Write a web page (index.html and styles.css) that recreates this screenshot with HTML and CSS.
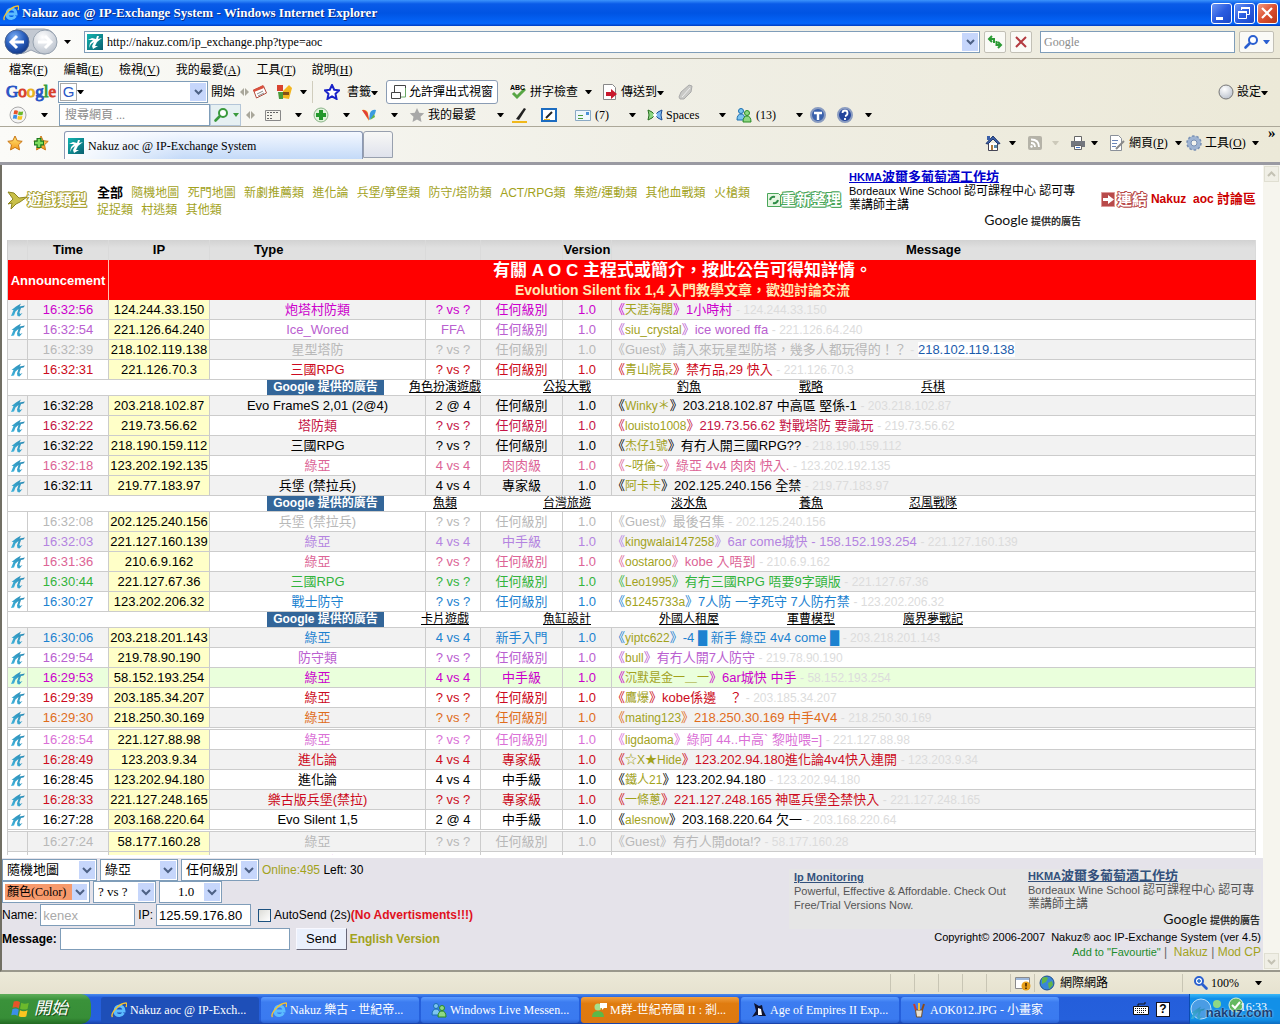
FILE: index.html
```html
<!doctype html>
<html lang="zh-Hant">
    <head>
        <meta charset="UTF-8" />
        <title>Nakuz aoc @ IP-Exchange System</title>
        <link rel="stylesheet" href="styles.css">
    </head>
    <body>
        <!-- shared icons -->
        <svg class="defs" width="0" height="0">
            <defs>
                <linearGradient id="gTeal" x1="0" y1="0" x2="1" y2="1"><stop offset="0" stop-color="#13b5b0"/><stop offset="1" stop-color="#0a5f70"/></linearGradient>
                <linearGradient id="gKite" x1="1" y1="0" x2="0" y2="1"><stop offset="0" stop-color="#2a86b0"/><stop offset="1" stop-color="#3fb4dc"/></linearGradient>
                <radialGradient id="gNav" cx=".4" cy=".3" r=".8"><stop offset="0" stop-color="#7fb2f5"/><stop offset=".5" stop-color="#2a5fbe"/><stop offset="1" stop-color="#0c2d78"/></radialGradient>
                <radialGradient id="gGrey" cx=".4" cy=".3" r=".8"><stop offset="0" stop-color="#fff"/><stop offset="1" stop-color="#b4bcc8"/></radialGradient>
                <linearGradient id="gStar" x1="0" y1="0" x2="0" y2="1"><stop offset="0" stop-color="#ffe97a"/><stop offset="1" stop-color="#f59a1c"/></linearGradient>
                <symbol id="kite" viewBox="0 0 16 16"><path fill="url(#gKite)" d="M1 14 L3.500 8 L1.500 8 L6 4.500 L11 1.500 L9.500 4.500 L15 3.500 L13.500 5.500 L11 6 L9.500 10.500 L10 12 L12.500 11 L9.500 14.500 L7.500 14 L7 11.500 L8.500 7 L5.500 9.500 L4 13.500 Z"/></symbol>
                <symbol id="site" viewBox="0 0 16 16"><path fill="url(#gTeal)" d="M0 0h16v16H0z"/><path fill="#fff" d="M1 6 L5 4 L9 5 L10 2 L12 2 L11 5 L15 4 L10 8 L8 12 L11 12 L6 15 L5 12 L7 8 L4 10 L2 14 L3 9 L6 6 Z"/></symbol>
                <symbol id="ie" viewBox="0 0 16 16"><path fill="none" stroke="#5cbcff" stroke-width="3" d="M4 9h9c0-3-2-5-4.500-5S4 6 4 9s2 4.500 4.500 4.500c2 0 3-1 4-2.500"/><path fill="none" stroke="#f7c331" stroke-width="1.400" d="M1.500 15C-1 12 8 1 15 1c1 0 1 2 0 4"/></symbol>
                <symbol id="star" viewBox="0 0 16 16"><path d="M8 1l2.200 4.700 5 .6-3.700 3.500 1 5.100L8 12.400 3.500 14.900l1-5.100L.8 6.300l5-.6z"/></symbol>
                <symbol id="flag" viewBox="0 0 16 16"><path fill="#e8542a" d="M3 2q3-1 5 .5L7 7.500Q5 6 2 7z"/><path fill="#6cb92c" d="M9 3q3 1.500 6 0l-1 5q-3 1-6-.3z"/><path fill="#3c8fe8" d="M2 8q3-1 5 .5L6 13.500Q4 12 1 13z"/><path fill="#f9c520" d="M8 9q3 1.500 6 0l-1 5q-3 1-6-.3z"/></symbol>
                <symbol id="people" viewBox="0 0 16 16"><g stroke-width="1"><circle cx="5" cy="4" r="2.500" fill="#7cc4f0" stroke="#1a6eb0"/><path fill="#7cc4f0" stroke="#1a6eb0" d="M1 13q0-6 4-6t4 6z"/><circle cx="11" cy="6" r="2.500" fill="#8ed884" stroke="#2a8a24"/><path fill="#8ed884" stroke="#2a8a24" d="M7 15q0-6 4-6t4 6z"/></g></symbol>
                <symbol id="lens" viewBox="0 0 16 16"><circle cx="10" cy="6" r="4" fill="#fff" stroke="currentColor" stroke-width="2"/><path stroke="currentColor" stroke-width="2.600" stroke-linecap="round" d="M6.500 9.500L2.500 13.500"/></symbol>
            </defs>
        </svg>

        <header class="titlebar">
            <svg class="icon"><use href="#ie"/></svg>
            <h1>Nakuz aoc @ IP-Exchange System - Windows Internet Explorer</h1>
            <button class="win" aria-label="Minimize"><svg width="21" height="21"><path fill="#fff" d="M5 14h7v3H5z"/></svg></button>
            <button class="win" aria-label="Restore"><svg width="21" height="21" fill="none" stroke="#fff"><path d="M7.500 7V4.500h8v7H13M4.500 8.500h8v7h-8z"/><path stroke-width="2" d="M7 5h9M4 9h9"/></svg></button>
            <button class="win close" aria-label="Close"><svg width="21" height="21" stroke="#fff" stroke-width="2.200"><path d="M5 5l10 10M15 5L5 15"/></svg></button>
        </header>

        <div class="addressbar">
            <svg class="nav" width="74" height="28" viewBox="0 0 74 28">
                <path fill="#c3c9d2" stroke="#9aa4b2" d="M16 1h28a12 12 0 0 1 0 25q-6 0-13-4-6 4-15 4z"/>
                <circle cx="17" cy="14" r="12" fill="url(#gNav)" stroke="#47618f"/>
                <circle cx="45" cy="14" r="12" fill="url(#gGrey)" stroke="#98a3b0"/>
                <path fill="none" stroke="#fff" stroke-width="3" d="M24 14H12M17 8l-6 6 6 6"/>
                <path fill="none" stroke="#fff" stroke-width="3" d="M38 14h12M45 8l6 6-6 6"/>
                <path d="M64 12h7l-3.500 4z"/>
            </svg>
            <div class="url">
                <svg class="icon"><use href="#site"/></svg>
                <input aria-label="Address" value="http://nakuz.com/ip_exchange.php?type=aoc">
                <button class="drop" aria-label="History"></button>
            </div>
            <button class="tool" aria-label="Refresh"><svg width="16" height="16" fill="none" stroke="#2b9a34" stroke-width="2"><path d="M5 2L2 5l3 3M2.500 5H7v4"/><path d="M11 8l3 3-3 3M13.500 11H9.500V7"/></svg></button>
            <button class="tool" aria-label="Stop"><svg width="16" height="16" stroke="#b33a40" stroke-width="2"><path d="M3 3l10 10M13 3L3 13"/></svg></button>
            <input class="search" aria-label="Search" placeholder="Google">
            <button class="tool find" aria-label="Go"><svg class="icon"><use href="#lens"/></svg><i class="caret"></i></button>
        </div>

        <nav class="menubar">
            <button>檔案(<u>F</u>)</button>
            <button>編輯(<u>E</u>)</button>
            <button>檢視(<u>V</u>)</button>
            <button>我的最愛(<u>A</u>)</button>
            <button>工具(<u>T</u>)</button>
            <button>說明(<u>H</u>)</button>
        </nav>

        <div class="googlebar">
            <span class="glogo"><b class="gb">G</b><b class="gr">o</b><b class="gy">o</b><b class="gb">g</b><b class="gg">l</b><b class="gr">e</b></span>
            <div class="combo"><span class="gbox">G</span><i class="caret"></i><input aria-label="Google search"><button class="drop" aria-label="More"></button></div>
            <button>開始</button>
            <i class="grip"></i>
            <svg class="icon"><path fill="#fff" stroke="#b34a3c" d="M1.500 6l10-4 3 7-10 5z"/><path fill="#d8503e" d="M1 6l10-5 1 3L2 8z"/><path stroke="#8a8a8a" d="M5 10l6-3M6 12l6-3"/></svg>
            <svg class="icon"><path fill="#d9432f" d="M1 1h6v6H1z"/><path fill="#4a9b3c" d="M2 8h6l-1 7H3z"/><path fill="#f3b61f" d="M7 7l6-6 3 3-3 11-6-1z"/><path fill="#844f18" d="M7 8h6v3H7z"/></svg>
            <i class="caret"></i>
            <i class="rule"></i>
            <svg class="icon" fill="#fff" stroke="#1a23c8" stroke-width="2"><use href="#star"/></svg>
            <button>書籤<i class="caret"></i></button>
            <button class="popup"><svg class="icon" fill="#fff" stroke="#444"><path d="M4.500 1.500h11v7h-11z"/><path stroke="#6aa864" d="M7.500 9v4h8V4"/><path d="M1.500 8.500h9v6h-9z"/></svg>允許彈出式視窗</button>
            <svg class="icon"><path fill="none" stroke="#58a644" stroke-width="3" d="M3 9l4 4 8-8"/><text x="0" y="6" class="abc">ABC</text></svg>
            <button>拼字檢查</button>
            <i class="caret"></i>
            <svg class="icon"><path fill="#fff" stroke="#888" d="M1.500.5h9l3 3v12h-12z"/><path fill="#c8182c" d="M4 8h5V5l6 5-6 5v-3H4z"/></svg>
            <button>傳送到<i class="caret"></i></button>
            <svg class="icon"><path fill="#c9c9c6" stroke="#aaa" d="M2 13l2-5 8-7 3 1-1 6-7 7-4 0z"/><path stroke="#eee" d="M5 13l8-9"/></svg>
            <span></span>
            <svg class="icon"><circle cx="8" cy="8" r="7" fill="url(#gGrey)" stroke="#777"/></svg>
            <button>設定<i class="caret"></i></button>
        </div>

        <div class="livebar">
            <svg class="icon big" viewBox="0 0 18 18"><circle cx="9" cy="9" r="8" fill="#f4f4f4" stroke="#a9a9a9"/><use href="#flag" x="3" y="3" width="12" height="12"/></svg>
            <i class="caret"></i>
            <input aria-label="Search web" placeholder="搜尋網頁 ...">
            <button class="gofind" aria-label="Search"><svg class="icon"><use href="#lens"/></svg><i class="caret"></i></button>
            <i class="grip"></i>
            <svg class="icon"><path fill="#f5f4ec" stroke="#888" d="M.5 3.500h15v10H.5z"/><path stroke="#666" stroke-dasharray="2 1" d="M2 5.500h12M2 8.500h5M2 11.500h5"/></svg>
            <i class="caret"></i>
            <svg class="icon"><circle cx="8" cy="8" r="7" fill="#dff2da" stroke="#8ab488"/><path stroke="#23982c" stroke-width="4" d="M8 3v10M3 8h10"/></svg>
            <i class="caret"></i>
            <svg class="icon"><path fill="#f39c1c" d="M8 14L1 3q4-1 6 3z"/><path fill="#e03c3c" d="M1 3q5 0 6 5l1 5z"/><path fill="#3a9be0" d="M8 13l1-7q2-4 6-3-1 7-7 10z"/><path fill="#62b548" d="M9 13l4-6 1 3z"/></svg>
            <i class="caret"></i>
            <svg class="icon" fill="#a8a8a8"><use href="#star"/></svg>
            <button>我的最愛</button>
            <i class="caret"></i>
            <svg class="icon"><path fill="#222" d="M4 12L12 1l2 1-7 11z"/><path stroke="#f0b81c" stroke-width="2" d="M0 15h15"/></svg>
            <svg class="icon"><path fill="#fff" stroke="#1c6cc0" stroke-width="2" d="M1 2h14v12H1z"/><path stroke="#222" stroke-width="2" d="M5 11l6-6"/><path stroke="#f0b81c" d="M3 12.500h6"/></svg>
            <svg class="icon"><path fill="#eef6fc" stroke="#8aa9c4" d="M.5 3.500h15v10H.5z"/><path stroke="#4a9b3c" d="M3 8.500h5M3 11.500h5"/><path fill="#4a90d8" d="M11 5h3v3h-3z"/></svg>
            <button>(7)</button>
            <i class="caret"></i>
            <svg class="icon"><path fill="#8ed884" stroke="#286e20" d="M1 3l4 2 3 3-3 3-4 2 1-5z"/><path fill="#7cb8f0" stroke="#1c4e94" d="M15 3l-4 2-3 3 3 3 4 2-1-5z"/><circle cx="8" cy="8" r="2" fill="#fff"/></svg>
            <button>Spaces</button>
            <i class="caret"></i>
            <svg class="icon"><use href="#people"/></svg>
            <button>(13)</button>
            <i class="caret"></i>
            <svg class="icon"><circle cx="8" cy="8" r="7" fill="#3a62ac" stroke="#8a9cc0" stroke-width="2"/><path stroke="#fff" stroke-width="2.400" d="M4 6h8M8 6v7"/></svg>
            <svg class="icon"><circle cx="8" cy="8" r="7" fill="#24459c" stroke="#8a9cc0" stroke-width="2"/><path fill="none" stroke="#fff" stroke-width="1.800" d="M5.500 6q0-2.500 2.500-2.500T10.500 6 8 9M8 11v2"/></svg>
            <i class="caret"></i>
        </div>

        <div class="tabrow">
            <svg class="icon" fill="url(#gStar)" stroke="#c87414"><use href="#star"/></svg>
            <svg class="icon"><g fill="url(#gStar)" stroke="#c87414"><use href="#star"/></g><path stroke="#1f7a20" stroke-width="5" d="M6 3v10M1 8h10"/><path stroke="#7ddc5c" stroke-width="2.500" d="M6 4v8M2 8h8"/></svg>
            <button class="tab"><svg class="icon"><use href="#site"/></svg>Nakuz aoc @ IP-Exchange System</button>
            <button class="newtab" aria-label="New tab"></button>
            <span></span>
            <svg class="icon"><path fill="#fff" stroke="#445" d="M3.500 8v7.500h9V8"/><path fill="#3b5fa8" stroke="#22396e" d="M1 8.500L8 1l7 7.500-2 .5-5-5-5 5z"/><path fill="#3b5fa8" d="M2 1h3v4H2z"/><path fill="#b07a3a" d="M6 10h2v5H6z"/><path fill="#58a" d="M9 10h3v3H9z"/></svg>
            <i class="caret"></i>
            <svg class="icon"><rect x="1" y="1" width="14" height="14" rx="2" fill="#b5b3a8"/><path fill="none" stroke="#fff" stroke-width="1.800" d="M4 8q4 0 4 4M4 4.500q8 0 8 7.500"/><circle cx="4.500" cy="11.500" r="1.200" fill="#fff"/></svg>
            <i class="caret pale"></i>
            <svg class="icon"><path fill="#fff" stroke="#666" d="M4.500 1.500h7v5h-7z"/><path fill="#73777e" d="M1 6h14v6H1z"/><path fill="#fff" stroke="#666" d="M4.500 10.500h7v4h-7z"/><path stroke="#3f74c8" d="M6 12.500h4"/></svg>
            <i class="caret"></i>
            <svg class="icon"><path fill="#fff" stroke="#8a9099" d="M1.500.5h8l3 3v12h-11z"/><path stroke="#6b86b8" d="M3 5.500h6M3 8.500h5M3 11.500h4"/><path stroke="#888" stroke-width="2" d="M7 14l8-8"/></svg>
            <button>網頁(<u>P</u>)</button>
            <i class="caret"></i>
            <svg class="icon"><circle cx="8" cy="8" r="5" fill="none" stroke="#9fb4d2" stroke-width="4"/><circle cx="8" cy="8" r="7" fill="none" stroke="#7890b4" stroke-width="1.500" stroke-dasharray="2.500 1.900"/><circle cx="8" cy="8" r="3" fill="#f4f4ee" stroke="#7890b4"/></svg>
            <button>工具(<u>O</u>)</button>
            <i class="caret"></i>
            <button class="chevrons">»</button>
        </div>

        <div class="viewport">
            <main class="page">
                <section class="list">
                    <div class="top">
                        <div class="banner gold"><svg width="20" height="20" fill="#c9c04a" stroke="#8d8520"><path d="M1 2l6 1 5 5 8-1-7 5-4 2-5 5 1-6-4 1 5-5z"/></svg><span>遊戲類型</span></div>
                        <div class="cats">
                            <a href="#" class="on">全部</a> <a href="#">隨機地圖</a> <a href="#">死門地圖</a> <a href="#">新劇推薦類</a> <a href="#">進化論</a> <a href="#">兵堡/箏堡類</a> <a href="#">防守/塔防類</a> <a href="#">ACT/RPG類</a> <a href="#">集遊/運動類</a> <a href="#">其他血戰類</a> <a href="#">火槍類</a><br>
                            <a href="#">捉捉類</a> <a href="#">村逃類</a> <a href="#">其他類</a>
                        </div>
                        <a href="#" class="banner reload"><svg width="14" height="14"><path fill="#e6f6e2" stroke="#4aa65a" d="M.5.5h11l2 2v11H.5z"/><path fill="none" stroke="#2e8c46" stroke-width="2" d="M3 7q1-4 5-3M11 7q-1 4-5 3"/></svg><span>重新整理</span></a>
                        <div class="ad">
                            <a href="#">HKMA<span>波爾多葡萄酒工作坊</span></a>
                            <p>Bordeaux Wine School <span>認可課程中心 認可專業講師主講</span></p>
                            <div class="by"><b>Google</b> 提供的廣告</div>
                        </div>
                        <div class="forum">
                            <a href="#" class="banner link"><svg width="16" height="16"><path fill="#b84a4a" stroke="#d99" d="M.5.5h13v14H.5z"/><path fill="#fff" d="M2 6h5V3l6 4.500L7 12V9H2z"/></svg><span>連結</span></a>
                            <a href="#">Nakuz&nbsp; aoc <span>討論區</span></a>
                        </div>
                    </div>

                    <table>
                        <colgroup><col class="c-ico"><col class="c-time"><col class="c-ip"><col class="c-type"><col class="c-vs"><col class="c-lv"><col class="c-ver"><col></colgroup>
                        <thead>
                            <tr><th></th><th>Time</th><th>IP</th><th class="left">Type</th><th></th><th></th><th>Version</th><th>Message</th></tr>
                        </thead>
                        <tbody>
                            <tr class="notice"><th colspan="2">Announcement</th><td colspan="6"><strong>有關 A O C 主程式或簡介，按此公告可得知詳情。</strong><br><b>Evolution Silent fix 1,4 入門教學文章，歡迎討論交流</b></td></tr>
                            <tr class="alt magenta"><td><svg><use href="#kite"/></svg></td><td>16:32:56</td><td>124.244.33.150</td><td>炮塔村防類</td><td>? vs ?</td><td>任何級別</td><td>1.0</td><td>《<a href="#">天涯海闊</a>》1小時村 <small>- 124.244.33.150</small></td></tr>
                            <tr class="orchid"><td><svg><use href="#kite"/></svg></td><td>16:32:54</td><td>221.126.64.240</td><td>Ice_Wored</td><td>FFA</td><td>任何級別</td><td>1.0</td><td>《<a href="#">siu_crystal</a>》ice wored ffa <small>- 221.126.64.240</small></td></tr>
                            <tr class="alt grey"><td></td><td>16:32:39</td><td>218.102.119.138</td><td>星型塔防</td><td>? vs ?</td><td>任何級別</td><td>1.0</td><td>《Guest》請入來玩星型防塔，幾多人都玩得的！？ <small>-</small> <mark>218.102.119.138</mark></td></tr>
                            <tr class="red"><td><svg><use href="#kite"/></svg></td><td>16:32:31</td><td>221.126.70.3</td><td>三國RPG</td><td>? vs ?</td><td>任何級別</td><td>1.0</td><td>《<a href="#">青山院長</a>》禁冇品,29 快入 <small>- 221.126.70.3</small></td></tr>
                            <tr class="ads"><td colspan="8"><div><b>Google 提供的廣告</b><a href="#">角色扮演遊戲</a><a href="#">公投大戰</a><a href="#">釣魚</a><a href="#">戰略</a><a href="#">兵棋</a></div></td></tr>
                            <tr class="alt"><td><svg><use href="#kite"/></svg></td><td>16:32:28</td><td>203.218.102.87</td><td>Evo FrameS 2,01 (2@4)</td><td>2 @ 4</td><td>任何級別</td><td>1.0</td><td>《<a href="#">Winky＊</a>》203.218.102.87 中高區 堅係-1 <small>- 203.218.102.87</small></td></tr>
                            <tr class="crimson"><td><svg><use href="#kite"/></svg></td><td>16:32:22</td><td>219.73.56.62</td><td>塔防類</td><td>? vs ?</td><td>任何級別</td><td>1.0</td><td>《<a href="#">louisto1008</a>》219.73.56.62 對戰塔防 要識玩 <small>- 219.73.56.62</small></td></tr>
                            <tr class="alt"><td><svg><use href="#kite"/></svg></td><td>16:32:22</td><td>218.190.159.112</td><td>三國RPG</td><td>? vs ?</td><td>任何級別</td><td>1.0</td><td>《<a href="#">杰仔1號</a>》有冇人開三國RPG?? <small>- 218.190.159.112</small></td></tr>
                            <tr class="pink"><td><svg><use href="#kite"/></svg></td><td>16:32:18</td><td>123.202.192.135</td><td>綠亞</td><td>4 vs 4</td><td>肉肉級</td><td>1.0</td><td>《<a href="#">~呀倫~</a>》綠亞 4v4 肉肉 快入. <small>- 123.202.192.135</small></td></tr>
                            <tr class="alt"><td><svg><use href="#kite"/></svg></td><td>16:32:11</td><td>219.77.183.97</td><td>兵堡 (禁拉兵)</td><td>4 vs 4</td><td>專家級</td><td>1.0</td><td>《<a href="#">阿卡卡</a>》202.125.240.156 全禁 <small>- 219.77.183.97</small></td></tr>
                            <tr class="ads"><td colspan="8"><div><b>Google 提供的廣告</b><a href="#">魚類</a><a href="#">台灣旅遊</a><a href="#">淡水魚</a><a href="#">養魚</a><a href="#">忍風戰隊</a></div></td></tr>
                            <tr class="grey"><td></td><td>16:32:08</td><td>202.125.240.156</td><td>兵堡 (禁拉兵)</td><td>? vs ?</td><td>任何級別</td><td>1.0</td><td>《Guest》最後召集 <small>- 202.125.240.156</small></td></tr>
                            <tr class="alt purple"><td><svg><use href="#kite"/></svg></td><td>16:32:03</td><td>221.127.160.139</td><td>綠亞</td><td>4 vs 4</td><td>中手級</td><td>1.0</td><td>《<a href="#">kingwalai147258</a>》6ar come城快 - 158.152.193.254 <small>- 221.127.160.139</small></td></tr>
                            <tr class="pink"><td><svg><use href="#kite"/></svg></td><td>16:31:36</td><td>210.6.9.162</td><td>綠亞</td><td>? vs ?</td><td>任何級別</td><td>1.0</td><td>《<a href="#">oostaroo</a>》kobe 入唔到 <small>- 210.6.9.162</small></td></tr>
                            <tr class="alt lime"><td><svg><use href="#kite"/></svg></td><td>16:30:44</td><td>221.127.67.36</td><td>三國RPG</td><td>? vs ?</td><td>任何級別</td><td>1.0</td><td>《<a href="#">Leo1995</a>》有冇三國RPG 唔要9字頭版 <small>- 221.127.67.36</small></td></tr>
                            <tr class="blue"><td><svg><use href="#kite"/></svg></td><td>16:30:27</td><td>123.202.206.32</td><td>戰士防守</td><td>? vs ?</td><td>任何級別</td><td>1.0</td><td>《<a href="#">61245733a</a>》7人防 一字死守 7人防冇禁 <small>- 123.202.206.32</small></td></tr>
                            <tr class="ads"><td colspan="8"><div><b>Google 提供的廣告</b><a href="#">卡片遊戲</a><a href="#">魚缸設計</a><a href="#">外國人租屋</a><a href="#">軍曹模型</a><a href="#">魔界夢戰記</a></div></td></tr>
                            <tr class="alt blue"><td><svg><use href="#kite"/></svg></td><td>16:30:06</td><td>203.218.201.143</td><td>綠亞</td><td>4 vs 4</td><td>新手入門</td><td>1.0</td><td>《<a href="#">yiptc622</a>》-4 █ 新手 綠亞 4v4 come █ <small>- 203.218.201.143</small></td></tr>
                            <tr class="orchid"><td><svg><use href="#kite"/></svg></td><td>16:29:54</td><td>219.78.90.190</td><td>防守類</td><td>? vs ?</td><td>任何級別</td><td>1.0</td><td>《<a href="#">bull</a>》有冇人開7人防守 <small>- 219.78.90.190</small></td></tr>
                            <tr class="hot magenta"><td><svg><use href="#kite"/></svg></td><td>16:29:53</td><td>58.152.193.254</td><td>綠亞</td><td>4 vs 4</td><td>中手級</td><td>1.0</td><td>《<a href="#">沉默是金一＿一</a>》6ar城快 中手 <small>- 58.152.193.254</small></td></tr>
                            <tr class="red"><td><svg><use href="#kite"/></svg></td><td>16:29:39</td><td>203.185.34.207</td><td>綠亞</td><td>? vs ?</td><td>任何級別</td><td>1.0</td><td>《<a href="#">鷹爆</a>》kobe係邊　？ <small>- 203.185.34.207</small></td></tr>
                            <tr class="alt orange"><td><svg><use href="#kite"/></svg></td><td>16:29:30</td><td>218.250.30.169</td><td>綠亞</td><td>? vs ?</td><td>任何級別</td><td>1.0</td><td>《<a href="#">mating123</a>》218.250.30.169 中手4V4 <small>- 218.250.30.169</small></td></tr>
                            <tr class="gap"><td colspan="8"></td></tr>
                            <tr class="violet"><td><svg><use href="#kite"/></svg></td><td>16:28:54</td><td>221.127.88.98</td><td>綠亞</td><td>? vs ?</td><td>任何級別</td><td>1.0</td><td>《<a href="#">ligdaoma</a>》綠阿 44..中高` 黎啦喂=] <small>- 221.127.88.98</small></td></tr>
                            <tr class="alt red"><td><svg><use href="#kite"/></svg></td><td>16:28:49</td><td>123.203.9.34</td><td>進化論</td><td>4 vs 4</td><td>專家級</td><td>1.0</td><td>《<a href="#">☆X★Hide</a>》123.202.94.180進化論4v4快入連開 <small>- 123.203.9.34</small></td></tr>
                            <tr><td><svg><use href="#kite"/></svg></td><td>16:28:45</td><td>123.202.94.180</td><td>進化論</td><td>4 vs 4</td><td>中手級</td><td>1.0</td><td>《<a href="#">鐵人21</a>》123.202.94.180 <small>- 123.202.94.180</small></td></tr>
                            <tr class="alt red"><td><svg><use href="#kite"/></svg></td><td>16:28:33</td><td>221.127.248.165</td><td>樂古版兵堡(禁拉)</td><td>? vs ?</td><td>專家級</td><td>1.0</td><td>《<a href="#">一條蔥</a>》221.127.248.165 神區兵堡全禁快入 <small>- 221.127.248.165</small></td></tr>
                            <tr><td><svg><use href="#kite"/></svg></td><td>16:27:28</td><td>203.168.220.64</td><td>Evo Silent 1,5</td><td>2 @ 4</td><td>中手級</td><td>1.0</td><td>《<a href="#">alesnow</a>》203.168.220.64 欠一 <small>- 203.168.220.64</small></td></tr>
                            <tr class="gap"><td colspan="8"></td></tr>
                            <tr class="alt grey"><td></td><td>16:27:24</td><td>58.177.160.28</td><td>綠亞</td><td>? vs ?</td><td>任何級別</td><td>1.0</td><td>《Guest》有冇人開dota!? <small>- 58.177.160.28</small></td></tr>
                            <tr class="magenta"><td></td><td></td><td></td><td>炮塔村防類</td><td></td><td>任何級別</td><td></td><td></td></tr>
                        </tbody>
                    </table>
                </section>

                <footer class="panel">
                    <form>
                        <div class="line">
                            <select class="w-map" aria-label="Map"><option>隨機地圖</option></select>
                            <select class="w-type" aria-label="Type"><option>綠亞</option></select>
                            <select class="w-type" aria-label="Level"><option>任何級別</option></select>
                            <span><em>Online:495</em> Left: 30</span>
                        </div>
                        <div class="line">
                            <select class="w-color" aria-label="Color"><option>顏色(Color)</option></select>
                            <select class="w-small" aria-label="Players"><option>? vs ?</option></select>
                            <select class="w-small mid" aria-label="Version"><option>1.0</option></select>
                        </div>
                        <div class="line">
                            <label for="name">Name:</label><input id="name" class="w-text dim" value="kenex">
                            <label for="ip">IP:</label><input id="ip" class="w-text" value="125.59.176.80">
                            <input type="checkbox" id="auto"><label for="auto">AutoSend (2s)<b class="warn">(No Advertisments!!!)</b></label>
                        </div>
                        <div class="line">
                            <label for="msg"><b>Message:</b></label><input id="msg" class="w-msg">
                            <button type="button" class="send">Send</button>
                            <a href="#">English Version</a>
                        </div>
                    </form>
                    <div class="info">
                        <div class="pair">
                            <div class="ad soft"><a href="#">Ip Monitoring</a><p>Powerful, Effective &amp; Affordable. Check Out Free/Trial Versions Now.</p></div>
                            <div class="ad soft">
                                <a href="#">HKMA<span>波爾多葡萄酒工作坊</span></a>
                                <p>Bordeaux Wine School <span>認可課程中心 認可專業講師主講</span></p>
                                <div class="by"><b>Google</b> 提供的廣告</div>
                            </div>
                        </div>
                        <p class="copy">Copyright© 2006-2007&nbsp; Nakuz® aoc IP-Exchange System (ver 4.5)</p>
                        <p class="links"><a href="#" class="fav">Add to "Favourtie"</a> |&nbsp; <a href="#">Nakuz</a> | <a href="#">Mod CP</a></p>
                    </div>
                </footer>
            </main>
            <div class="scroll">
                <button aria-label="Up"><svg width="15" height="15"><path fill="none" stroke="#c4c2b4" stroke-width="2" d="M4 9l3.500-3.500L11 9"/></svg></button>
                <button aria-label="Down"><svg width="15" height="15"><path fill="none" stroke="#c4c2b4" stroke-width="2" d="M4 6l3.500 3.500L11 6"/></svg></button>
            </div>
        </div>

        <div class="statusbar">
            <i></i><i></i><i></i><i></i><i></i>
            <span><svg class="icon"><path fill="#fff" stroke="#8a8a8a" d="M.5 2.500h14v11H.5z"/><path fill="#9db8dc" d="M1 3h13v2H1z"/><circle cx="11" cy="11" r="4.500" fill="#e8a01c"/><path stroke="#4a2800" stroke-width="1.600" d="M11 8v3.500M11 12.500v1.500"/></svg></span>
            <span class="zone"><svg class="icon"><circle cx="8" cy="8" r="7" fill="#3a86d8" stroke="#1e4f90"/><path fill="#62b548" d="M3 3q4-2 6 0l-2 4-4 2zM9 8l4-2 1 4-4 4z"/></svg>網際網路</span>
            <span class="zoom"><svg class="icon"><g transform="matrix(-1 0 0 1 16 0)"><use href="#lens"/></g><path stroke="#2a6fc8" stroke-width="1.500" d="M4 6h4M6 4v4"/></svg><span>100%</span><i class="caret"></i></span>
        </div>

        <div class="taskbar">
            <button class="start"><svg width="20" height="20"><use href="#flag"/></svg>開始</button>
            <div class="tasks">
                <button class="active"><svg class="icon"><use href="#ie"/></svg>Nakuz aoc @ IP-Exch...</button>
                <button><svg class="icon"><use href="#ie"/></svg>Nakuz 樂古 - 世紀帝...</button>
                <button><svg class="icon"><use href="#people"/></svg>Windows Live Messen...</button>
                <button class="flash"><svg class="icon"><circle cx="7" cy="5" r="3.500" fill="#a6e08c"/><path fill="#5cb848" d="M1 15q0-6 6-6t6 6z"/><path fill="#fff" d="M9 1h7v5h-3l-2 2V6H9z"/></svg>M群-世紀帝國 II : 剎...</button>
                <button><svg class="icon"><path fill="#101430" d="M3 1l5 3 3-1 1 5 3 6H9l-3-1-5 2 4-6z"/><path fill="#fff" d="M7 6l3 1 1 6-4 0z"/></svg>Age of Empires II Exp...</button>
                <button><svg class="icon"><path fill="#e8e0d0" stroke="#6d5030" d="M4.500 8h7l-1 7h-5z"/><path stroke="#c83c2c" stroke-width="2" d="M5 8L3 2"/><path stroke="#f0c040" stroke-width="2" d="M8 8V1"/><path stroke="#8a4a1c" stroke-width="2" d="M11 8l2-6"/></svg>AOK012.JPG - 小畫家</button>
            </div>
            <div class="lang">
                <svg class="icon"><path fill="#fff" stroke="#111" d="M.5 5.500h15v8H.5z"/><path stroke="#111" stroke-dasharray="1 1" d="M2 7.500h12M2 9.500h12M4 11.500h8"/><path fill="none" stroke="#111" d="M5 5V3h7V1"/></svg>
                <span>?</span>
            </div>
            <div class="tray">
                <svg width="70" height="26" viewBox="0 0 70 26"><circle cx="11" cy="13" r="10" fill="#4a9ce4" stroke="#b8def8"/><circle cx="27" cy="8" r="4" fill="#8ed884"/><circle cx="46" cy="9" r="7" fill="#64b860" stroke="#dff0d8"/><path fill="none" stroke="#fff" stroke-width="2" d="M42 9l3 3 5-6"/></svg>
                <time>16:33</time>
                <div class="mark"><svg class="icon"><use href="#kite"/></svg>nakuz.com</div>
            </div>
        </div>
    </body>
</html>
```
FILE: styles.css
```css
:root {
    --sans: "Liberation Sans", "Noto Sans CJK TC", sans-serif;
    --serif: "Liberation Serif", "Noto Sans CJK TC", serif;
    --chrome: #ece9d8;
    --olive: #a2a21c;
    --line: #cccccc;
    --box: #7f9db9;
}

* {
    box-sizing: border-box;
}

body {
    margin: 0;
    height: 100vh;
    display: flex;
    flex-direction: column;
    overflow: hidden;
    background: var(--chrome);
    font: 12px/16px var(--serif);
    color: #000;
}

button,
input,
select {
    font: inherit;
    color: inherit;
    margin: 0;
    border-radius: 0;
}

button {
    padding: 0;
    border: 0;
    background: none;
    white-space: nowrap;
    text-align: left;
}

input {
    min-width: 0;
    border: 1px solid var(--box);
    background: #fff;
}

p {
    margin: 0;
}

.defs {
    position: absolute;
}

.icon {
    width: 16px;
    height: 16px;
    flex: none;
}

.icon.big {
    width: 18px;
    height: 18px;
}

.caret {
    display: inline-block;
    width: 7px;
    border: solid transparent;
    border-width: 4px 3px 0;
    border-top-color: #000;
    vertical-align: middle;
}

.caret.pale {
    border-top-color: #ccc9ba;
}

.grip {
    width: 9px;
    height: 8px;
    background: url("data:image/svg+xml,%3Csvg xmlns='http://www.w3.org/2000/svg' width='9' height='8'%3E%3Cpath fill='%23a9a79b' d='M4 0v8L0 4zM5 0v8l4-4z'/%3E%3C/svg%3E") no-repeat;
}

.rule {
    width: 1px;
    height: 22px;
    background: #d0cdbd;
}

.drop {
    width: 16px;
    height: 18px;
    flex: none;
    background: #c6d6fb url("data:image/svg+xml,%3Csvg xmlns='http://www.w3.org/2000/svg' width='9' height='6'%3E%3Cpath fill='none' stroke='%234d6185' stroke-width='2' d='M1 1l3.500 3.500L8 1'/%3E%3C/svg%3E") center no-repeat;
}

/* title bar */
.titlebar {
    flex: none;
    height: 26px;
    display: flex;
    align-items: center;
    gap: 2px;
    padding: 0 2px 0 3px;
    background: linear-gradient(#3c94fc, #0a5be8 15%, #0054e3 50%, #0566fa 90%, #003cc0);
    color: #fff;
}

.titlebar h1 {
    flex: 1;
    margin: 0 0 0 1px;
    font-size: 13px;
    text-shadow: 1px 1px #0a2a80;
}

.win {
    width: 21px;
    height: 21px;
    border: 1px solid #fff;
    border-radius: 3px;
    background: linear-gradient(135deg, #6c96f4, #2a5ce0 50%, #1b48c8);
}

.win svg {
    display: block;
    margin: -1px;
}

.win.close {
    background: linear-gradient(135deg, #f09a80, #dc5030 50%, #b83818);
}

/* address bar */
.addressbar {
    flex: none;
    height: 33px;
    display: flex;
    align-items: center;
    gap: 4px;
    padding: 0 6px 0 0;
    border-bottom: 1px solid #aca899;
    background: linear-gradient(90deg, #fcfcfa, #f0efe8 60%, #ece9d8);
}

.nav {
    flex: none;
    margin-right: 6px;
}

.url {
    flex: 1;
    display: flex;
    align-items: center;
    height: 22px;
    padding: 0 1px 0 2px;
    border: 1px solid var(--box);
    background: #fff;
}

.url input {
    flex: 1;
    border: 0;
    padding: 0 4px;
}

.tool {
    width: 22px;
    height: 22px;
    border: 1px solid #c2c0b6;
    border-radius: 2px;
    background: #fafaf6;
    display: flex;
    align-items: center;
    justify-content: center;
}

.search {
    width: 195px;
    height: 22px;
    margin-left: 4px;
    padding: 0 3px;
}

::placeholder {
    color: #8c8c8c;
    opacity: 1;
}

.find {
    width: 35px;
    gap: 4px;
    color: #2a5fd0;
}

.find .caret {
    border-top-color: #2a5fd0;
}

/* menu and toolbars */
.menubar,
.googlebar,
.livebar,
.tabrow {
    flex: none;
    background: linear-gradient(90deg, #fbfbf8, #f0efe6 50%, #ece9d8);
}

.menubar {
    display: flex;
    align-items: center;
    gap: 16px;
    height: 21px;
    padding-left: 9px;
}

.googlebar,
.livebar,
.tabrow {
    display: grid;
    align-items: center;
}

.googlebar {
    height: 24px;
    padding-left: 6px;
    grid-template-columns: 52px 153px 29px 12px 24px 24px 12px 12px 23px 39px 124px 20px 55px 17px 19px 56px 16px 1fr 19px 43px;
}

.glogo {
    font-size: 17px;
}

.glogo b {
    font-weight: normal;
    -webkit-text-stroke: 1px currentColor;
}

.gb { color: #2a56c6; }
.gr { color: #d8402c; }
.gy { color: #e8b020; }
.gg { color: #3a9c3c; }

.combo {
    display: flex;
    align-items: center;
    width: 150px;
    height: 22px;
    padding: 0 1px;
    border: 1px solid var(--box);
    background: #fff;
}

.combo input {
    flex: 1;
    border: 0;
}

.gbox {
    width: 17px;
    border: 1px solid #aaa;
    color: #2a56c6;
    font: 15px/16px var(--sans);
    text-align: center;
}

.popup {
    display: flex;
    align-items: center;
    gap: 3px;
    width: 112px;
    height: 24px;
    padding-left: 3px;
    border: 1px solid #8a9cb4;
    border-radius: 3px;
    background: #fff;
}

.abc {
    font: bold 7px var(--sans);
}

.livebar {
    height: 23px;
    padding-left: 9px;
    border-bottom: 1px solid #aca899;
    grid-template-columns: 32px 18px 151px 36px 19px 30px 18px 30px 18px 30px 18px 19px 69px 15px 29px 34px 20px 34px 18px 19px 53px 17px 20px 40px 14px 27px 28px 12px;
}

.livebar input {
    height: 22px;
    padding: 0 5px;
}

.gofind {
    width: 31px;
    height: 22px;
    display: flex;
    align-items: center;
    gap: 4px;
    padding: 0 1px 0 2px;
    border: 1px solid #b4c6d8;
    background: #e6f0f2;
    color: #3a9a3c;
}

.gofind .caret {
    border-top-color: #3a9a3c;
}

.tabrow {
    height: 38px;
    padding: 4px 0 0 7px;
    border-bottom: 3px solid #9a9aa2;
    grid-template-columns: 26px 31px 299px 30px 1fr 24px 18px 25px 18px 21px 18px 20px 46px 11px 19px 47px 16px 12px;
    align-items: start;
}

.tabrow > * {
    margin-top: 4px;
}

.tabrow > .caret {
    margin-top: 10px;
}

.tabrow > .tab,
.tabrow > .newtab {
    margin-top: 0;
}

.tab {
    height: 28px;
    display: flex;
    align-items: center;
    gap: 4px;
    padding-left: 3px;
    border: 1px solid #8c99b4;
    border-bottom: 0;
    border-radius: 3px 3px 0 0;
    background: linear-gradient(90deg, #fff, transparent 40%), linear-gradient(#f4f8ff, #c4daf8);
}

.newtab {
    height: 27px;
    border: 1px solid #98a0ae;
    border-radius: 3px 3px 0 0;
    background: linear-gradient(#f8f8f6, #dfe2ec);
}

.tabrow > .chevrons {
    margin-top: -6px;
    font-size: 15px;
    font-weight: bold;
}

/* page */
.viewport {
    flex: 1;
    min-height: 0;
    display: flex;
    border-left: 2px solid #716f64;
    border-bottom: 2px solid #9a988c;
    font-family: var(--sans);
}

.page {
    flex: 1;
    min-width: 0;
    display: flex;
    flex-direction: column;
    background: #fff;
}

.page a {
    color: var(--olive);
    text-decoration: none;
}

.list {
    flex: 1;
    min-height: 0;
    overflow: hidden;
    padding: 0 7px 0 5px;
    margin-bottom: 3px;
}

.top {
    display: flex;
    align-items: flex-start;
    height: 75px;
}

.banner {
    display: flex;
    align-items: center;
    flex: none;
    padding-top: 25px;
    font: bold 15px/20px var(--sans);
}

.banner span {
    color: #fff;
    text-shadow: 1px 0 var(--edge), -1px 0 var(--edge), 0 1px var(--edge), 0 -1px var(--edge), 1px 1px var(--edge), -1px -1px var(--edge);
}

.gold {
    --edge: #a8a030;
    width: 90px;
}

.reload {
    --edge: #4aa65a;
    width: 82px;
}

.link {
    --edge: #b84a4a;
}

.cats {
    width: 670px;
    padding-top: 19px;
    line-height: 17px;
    word-spacing: 5px;
    white-space: nowrap;
}

.cats .on {
    color: #000;
    font-weight: bold;
    font-size: 13px;
}

.ad {
    width: 232px;
    font-size: 11px;
    line-height: 14px;
}

.ad a {
    color: #0000cc;
    font-weight: bold;
    text-decoration: underline;
}

.ad a span {
    font-size: 13px;
}

.ad p span {
    font-size: 12px;
}

.top .ad {
    padding-top: 5px;
}

.by {
    text-align: right;
    font-size: 10px;
    line-height: 16px;
    font-weight: bold;
    color: #333;
}

.by b {
    font: 14px/16px Lato, var(--sans);
    color: #111;
}

.forum {
    margin-left: auto;
    display: flex;
    gap: 4px;
}

.page .forum > a:last-child {
    padding-top: 26px;
    color: #cc0000;
    font-weight: bold;
    white-space: nowrap;
}

.forum > a:last-child span {
    font-size: 13px;
}

/* the list of hosts */
table {
    width: 100%;
    table-layout: fixed;
    border-spacing: 0;
    border-left: 1px solid var(--line);
    font-size: 13px;
    line-height: 16px;
}

.c-ico { width: 20px; }
.c-time { width: 81px; }
.c-ip { width: 101px; }
.c-type { width: 216px; }
.c-vs { width: 55px; }
.c-lv { width: 82px; }
.c-ver { width: 49px; }

thead th {
    height: 20px;
    padding: 0;
    border-right: 1px solid #dadada;
    background: linear-gradient(#d2d2d2, #e0e0e0 40%);
    white-space: nowrap;
}

thead th.left {
    padding-left: 44px;
    text-align: left;
}

td {
    height: 20px;
    padding: 0;
    border: solid var(--line);
    border-width: 0 1px 1px 0;
    text-align: center;
    white-space: nowrap;
}

td svg {
    display: block;
    width: 16px;
    height: 16px;
    margin: 0 auto;
}

td:nth-child(3) {
    background: #ffffc8;
    color: #000;
}

td:nth-child(8) {
    text-align: left;
}

td small {
    font-size: 12px;
    color: #dcdcdc;
}

td a {
    font-size: 12px;
}

td mark {
    background: #fff;
    color: #1c5cac;
}

.alt { background: #f2f2f2; }
.hot { background: #eaffdc; }
.magenta { color: #cc00cc; }
.orchid { color: #ba60d0; }
.violet { color: #da70d6; }
.purple { color: #b484e0; }
.grey { color: #b8b8b8; }
.red { color: #cc0a20; }
.crimson { color: #c41446; }
.pink { color: #dc6496; }
.lime { color: #32b43c; }
.blue { color: #1c82d0; }
.orange { color: #e06c1c; }

.notice th,
.notice td {
    height: 40px;
    padding: 0;
    border: 0;
    background: #ff0000;
    color: #fff;
    line-height: 19px;
}

.notice th {
    border-right: 1px solid #ffc0b0;
}

.notice strong {
    font-size: 17px;
}

.notice b {
    color: #ffeab4;
    font-size: 14px;
}

.ads td {
    height: 16px;
    line-height: 15px;
}

.ads div {
    display: grid;
    grid-template-columns: 117px repeat(5, 122px);
    padding-left: 259px;
    font-size: 12px;
}

.ads b {
    background: #336699;
    color: #fff;
}

.page .ads a {
    color: #000;
    text-decoration: underline;
}

.gap td {
    height: 2px;
}

/* send panel */
.panel {
    flex: none;
    height: 112px;
    display: flex;
    justify-content: space-between;
    padding-top: 1px;
    background: #e5e3ea;
}

.line {
    display: flex;
    align-items: center;
    gap: 3px;
    height: 22px;
    white-space: nowrap;
}

.line:nth-child(n + 3) {
    height: 24px;
}

.line em {
    font-style: normal;
    color: var(--olive);
}

select {
    appearance: none;
    height: 22px;
    padding: 0 18px 0 4px;
    border: 1px solid var(--box);
    font-size: 13px;
    background: #fff url("data:image/svg+xml,%3Csvg xmlns='http://www.w3.org/2000/svg' width='16' height='18'%3E%3Cpath fill='%23c6d6fb' d='M0 0h16v18H0z'/%3E%3Cpath fill='none' stroke='%234d6185' stroke-width='2' d='M4 7l4 4 4-4'/%3E%3C/svg%3E") right 1px center no-repeat;
}

.w-map { width: 95px; }
.w-type { width: 78px; }

.w-color {
    width: 88px;
    background-color: #f79a6c;
    box-shadow: inset 0 0 0 2px #fff;
    font-family: var(--serif);
    font-size: 12px;
}

.w-small {
    width: 63px;
    font-family: var(--serif);
}

.mid {
    padding-left: 18px;
}

.line .w-text,
.line .w-msg {
    height: 22px;
    padding: 0 2px;
    font-size: 13px;
}

.w-text { width: 95px; }
.w-msg { width: 230px; }

.dim {
    color: #aaa;
}

.line input[type="checkbox"] {
    appearance: none;
    width: 13px;
    height: 13px;
    margin-left: 4px;
    border: 1px solid #1c5180;
    background: linear-gradient(135deg, #dcdcd7, #fff);
}

.warn {
    color: #e01020;
}

.send {
    width: 51px;
    height: 22px;
    margin-left: 3px;
    border: 1px solid;
    border-color: #f8f8ff #667 #667 #f8f8ff;
    background: #eaf0fc;
    font-size: 13px;
    text-align: center;
}

.line a {
    font-weight: bold;
}

.info {
    width: 474px;
    padding: 10px 2px 0 0;
    text-align: right;
    font-size: 11px;
}

.pair {
    display: grid;
    grid-template-columns: 1fr 233px;
    background: #e6e6e6;
    text-align: left;
}

.pair .ad:first-child {
    padding: 1px 10px 0 5px;
}

.soft {
    color: #555;
}

.page .soft a {
    color: #33517c;
}

.copy {
    white-space: nowrap;
    line-height: 17px;
}

.links {
    font-size: 12px;
    line-height: 13px;
    color: #666;
}

.page .fav {
    color: #1c8c2c;
    font-size: 11px;
}

.scroll {
    width: 17px;
    display: flex;
    flex-direction: column;
    justify-content: space-between;
    background: #f6f5ee;
}

.scroll button {
    width: 15px;
    height: 16px;
    margin: 1px;
    border: 1px solid #e0dfd2;
    background: #f0efe6;
}

.scroll svg {
    display: block;
    margin: -1px;
}

/* status bar */
.statusbar {
    flex: none;
    height: 22px;
    display: flex;
    justify-content: flex-end;
    align-items: center;
    padding-right: 18px;
    background: linear-gradient(#ece9d8, #e6e2cf);
}

.statusbar > * {
    height: 18px;
    width: 24px;
    padding-left: 4px;
    display: flex;
    align-items: center;
    border-left: 1px solid #c8c5b4;
}

.statusbar > .zone {
    width: 148px;
    gap: 5px;
}

.statusbar > .zoom {
    width: 80px;
    padding-left: 10px;
    gap: 2px;
    color: #2a5fd0;
}

.zoom span {
    color: #000;
}

.zoom .caret {
    margin-left: auto;
}

/* taskbar */
.taskbar {
    flex: none;
    height: 30px;
    display: flex;
    align-items: stretch;
    background: linear-gradient(#4a8cf0, #245edb 12%, #2560dc 85%, #1941a5);
    color: #fff;
}

.start {
    width: 91px;
    display: flex;
    align-items: center;
    gap: 4px;
    padding-left: 10px;
    border-radius: 0 10px 10px 0;
    background: linear-gradient(#5fae5a, #3a923a 20%, #378e37 80%, #226a22);
    font-size: 17px;
    font-style: italic;
    text-shadow: 1px 1px #1c4a1c;
}

.tasks {
    flex: 1;
    display: flex;
    gap: 2px;
    padding: 3px 0 1px 10px;
}

.tasks button {
    width: 158px;
    display: flex;
    align-items: center;
    gap: 3px;
    padding-left: 10px;
    border-radius: 3px;
    background: linear-gradient(#5c9cff, #3c7cf0 20%, #3a7af0 85%, #2c62d0);
}

.tasks .active {
    background: #1e4fb8;
}

.tasks .flash {
    background: linear-gradient(#f0a040, #e07c10 25%, #dc7810);
}

.lang {
    display: flex;
    align-items: center;
    gap: 8px;
    padding-right: 20px;
}

.lang span {
    width: 12px;
    height: 13px;
    background: #fff;
    color: #000;
    font: bold 12px/13px var(--sans);
    text-align: center;
    outline: 1px solid #112;
}

.tray {
    position: relative;
    width: 91px;
    padding: 2px 0 0;
    border-left: 1px solid #0a4cb0;
    background: linear-gradient(#3ab8f8, #1290e8 15%, #1290e8 85%, #0c6cc0);
}

.tray time {
    position: absolute;
    right: 13px;
    top: 5px;
}

/* site mark laid over the tray */
.mark {
    position: absolute;
    right: 7px;
    bottom: 1px;
    display: flex;
    align-items: center;
    color: #173f74;
    font: bold 13px/20px var(--sans);
    text-shadow: 0 0 2px #cfe8ff;
}
```
